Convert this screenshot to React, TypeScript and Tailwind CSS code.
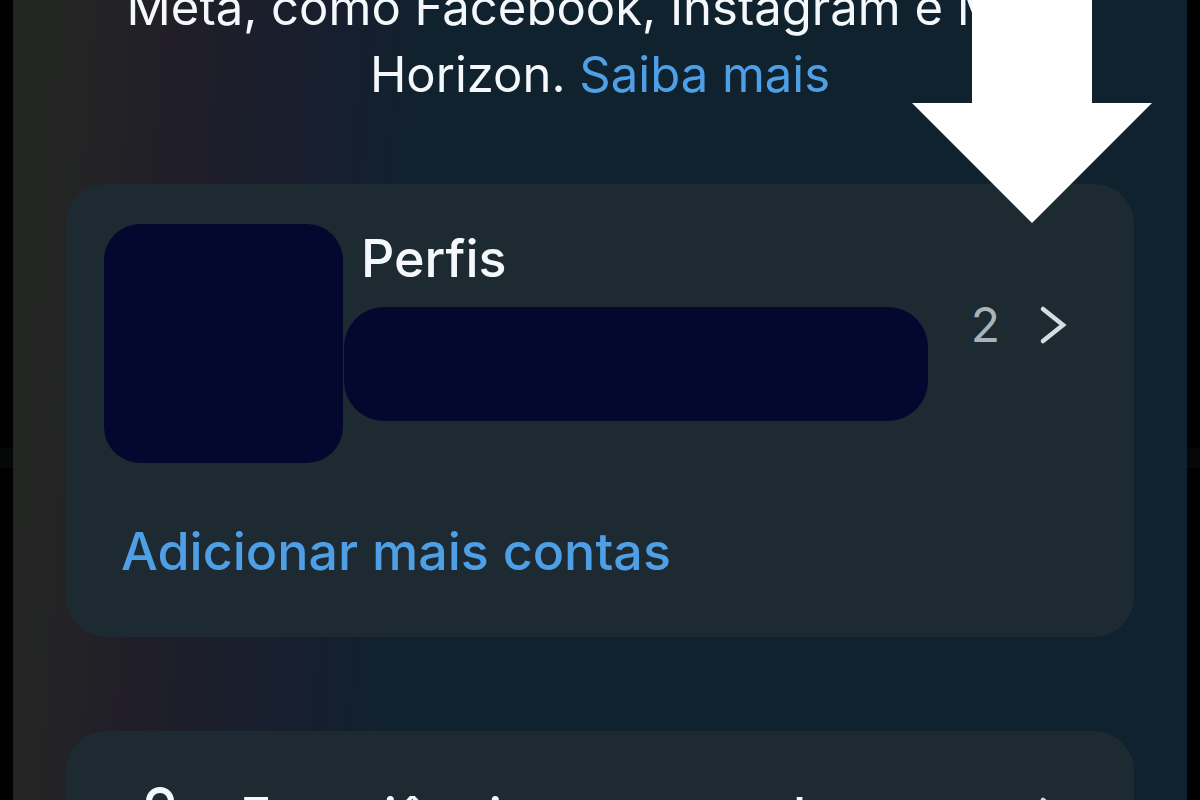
import React from "react";

function Redacted({ className }: { className: string }) {
  return <div className={`shrink-0 bg-[#04082f] ${className}`} />;
}

function Chevron({ className }: { className: string }) {
  return (
    <svg
      viewBox="0 0 30 40"
      className={`h-[40px] w-[30px] shrink-0 ${className}`}
      fill="none"
      stroke="#d5dde1"
      strokeWidth="4.5"
      strokeLinecap="round"
      aria-hidden="true"
    >
      <path d="M5 4 L25 20 L5 36" />
    </svg>
  );
}

export default function App() {
  return (
    <div className="h-screen overflow-hidden bg-[linear-gradient(180deg,#000_56%,#050708_56%,#050708_58.5%,#000_58.5%)] px-[13px] font-['Inter','Noto_Sans',sans-serif]">
      <main className="relative h-full overflow-hidden bg-[linear-gradient(94deg,#232523_0%,#232523_4%,#232326_8%,#211e28_13%,#1b1e2c_21%,#151f2e_28%,#10222e_35%,#10222f_100%)] px-[53px]">
        <p className="-mt-[26px] text-center text-[49px] leading-[67px] whitespace-nowrap text-[#f4f8fa]">
          Meta, como Facebook, Instagram e Meta
          <br />
          Horizon.{" "}
          <a href="#saiba-mais" className="text-[#4f9fe6]">
            Saiba mais
          </a>
        </p>

        <section className="mt-[76px] rounded-[40px] bg-[#1e2a32] px-[38px] pt-[40px] pb-[50px]">
          <div className="flex items-start">
            <Redacted className="size-[239px] rounded-[36px]" />
            <div className="min-w-0 flex-1">
              <h2 className="pl-[18px] text-[52px] leading-[70px] font-medium text-[#f4f8fa]">Perfis</h2>
              <Redacted className="mt-[13px] ml-px h-[114px] rounded-[40px]" />
            </div>
            <button
              type="button"
              aria-label="2 perfis"
              className="mt-[69px] mr-[28px] ml-[43px] flex items-center gap-[38px] text-[48px] leading-[64px] text-[#a9b4ba]"
            >
              2
              <Chevron className="" />
            </button>
          </div>
          <a href="#adicionar" className="mt-[54px] ml-[17px] block text-[52px] leading-[70px] font-medium text-[#4f9fe6]">
            Adicionar mais contas
          </a>
        </section>

        <section className="mt-[94px] rounded-[40px] bg-[#1e2a32] pr-[66px] pl-[78px] pt-[48px]">
          <div className="flex items-start gap-[60px]">
            <svg viewBox="0 0 36 60" className="mt-[8px] h-[60px] w-[36px] shrink-0" fill="none" stroke="#f4f8fa" strokeWidth="6" aria-hidden="true">
              <circle cx="16" cy="14" r="11" />
            </svg>
            <h2 className="flex-1 text-[52px] leading-[76px] font-medium whitespace-nowrap text-[#f4f8fa]">
              Experiências conectadas
            </h2>
            <Chevron className="mt-[17px]" />
          </div>
        </section>

        <svg viewBox="0 0 240 224" className="absolute top-0 right-[35px] h-[224px] w-[240px]" fill="#ffffff" aria-hidden="true">
          <path d="M60 0H180V103H240L120 223L0 103H60Z" />
        </svg>
      </main>
    </div>
  );
}
